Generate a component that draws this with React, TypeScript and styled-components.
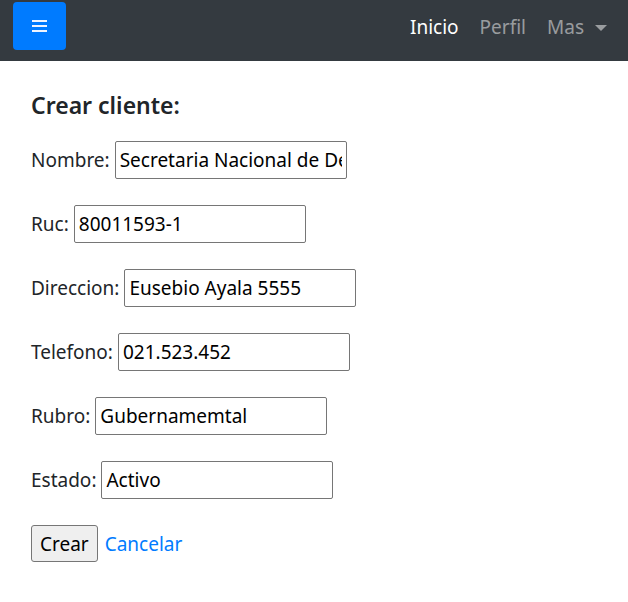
import React from 'react';
import styled, { createGlobalStyle } from 'styled-components';

const GlobalStyle = createGlobalStyle`
  body {
    margin: 0;
    font-family: 'Noto Sans', 'Open Sans', sans-serif;
    color: #212529;
    background: #fff;
  }
`;

const Navbar = styled.nav`
  height: 61px;
  background-color: #343a40;
  display: flex;
  align-items: flex-start;
  justify-content: space-between;
  padding: 2px 21px 0 13px;
  box-sizing: border-box;
`;

const MenuButton = styled.button`
  width: 53px;
  height: 48px;
  border: none;
  border-radius: 4px;
  background-color: #007bff;
  display: flex;
  align-items: center;
  justify-content: center;
  padding: 0;
`;

const NavLinks = styled.ul`
  list-style: none;
  margin: 0;
  padding: 0;
  display: flex;
  align-items: center;
  height: 50px;
  gap: 21px;
`;

const NavLink = styled.li<{ $active?: boolean }>`
  font-size: 19px;
  color: ${({ $active }) => ($active ? '#ffffff' : 'rgba(255, 255, 255, 0.5)')};
  display: flex;
  align-items: center;
`;

const Caret = styled.span`
  display: inline-block;
  margin-left: 11px;
  border-top: 6px solid rgba(255, 255, 255, 0.5);
  border-left: 6px solid transparent;
  border-right: 6px solid transparent;
  margin-top: 1px;
`;

const Main = styled.main`
  padding: 30px 31px;
`;

const Title = styled.h4`
  margin: 0 0 21px;
  font-size: 23px;
  font-weight: 600;
  line-height: 29px;
`;

const Form = styled.form`
  display: flex;
  flex-direction: column;
  gap: 26px;
`;

const Row = styled.div`
  display: flex;
  align-items: center;
  gap: 5px;
  height: 38px;
  font-size: 19px;
`;

const Input = styled.input`
  width: 232px;
  height: 38px;
  box-sizing: border-box;
  border: 1px solid #767676;
  border-radius: 2px;
  padding: 0 4px;
  font-family: inherit;
  font-size: 19px;
  color: #000;
`;

const Actions = styled.div`
  display: flex;
  align-items: center;
  gap: 7px;
  font-size: 19px;
`;

const SubmitButton = styled.button`
  height: 37px;
  padding: 0 8px;
  background-color: #efefef;
  border: 1px solid #767676;
  border-radius: 3px;
  font-family: inherit;
  font-size: 19px;
  color: #000;
`;

const CancelLink = styled.a`
  color: #007bff;
  text-decoration: none;
`;

const fields = [
  ['Nombre', 'Secretaria Nacional de Deportes'],
  ['Ruc', '80011593-1'],
  ['Direccion', 'Eusebio Ayala 5555'],
  ['Telefono', '021.523.452'],
  ['Rubro', 'Gubernamemtal'],
  ['Estado', 'Activo'],
];

const App = () => (
  <>
    <GlobalStyle />
    <Navbar>
      <MenuButton type="button" aria-label="menu">
        <svg width="15" height="12" viewBox="0 0 15 12">
          <rect x="0" y="0" width="15" height="2" fill="#eef4ff" />
          <rect x="0" y="5" width="15" height="2" fill="#eef4ff" />
          <rect x="0" y="10" width="15" height="2" fill="#eef4ff" />
        </svg>
      </MenuButton>
      <NavLinks>
        <NavLink $active>Inicio</NavLink>
        <NavLink>Perfil</NavLink>
        <NavLink>
          Mas
          <Caret />
        </NavLink>
      </NavLinks>
    </Navbar>
    <Main>
      <Title>Crear cliente:</Title>
      <Form onSubmit={(e) => e.preventDefault()}>
        {fields.map(([label, value]) => (
          <Row key={label}>
            <label>{label}:</label>
            <Input type="text" defaultValue={value} />
          </Row>
        ))}
        <Actions>
          <SubmitButton type="submit">Crear</SubmitButton>
          <CancelLink href="#">Cancelar</CancelLink>
        </Actions>
      </Form>
    </Main>
  </>
);

export default App;
